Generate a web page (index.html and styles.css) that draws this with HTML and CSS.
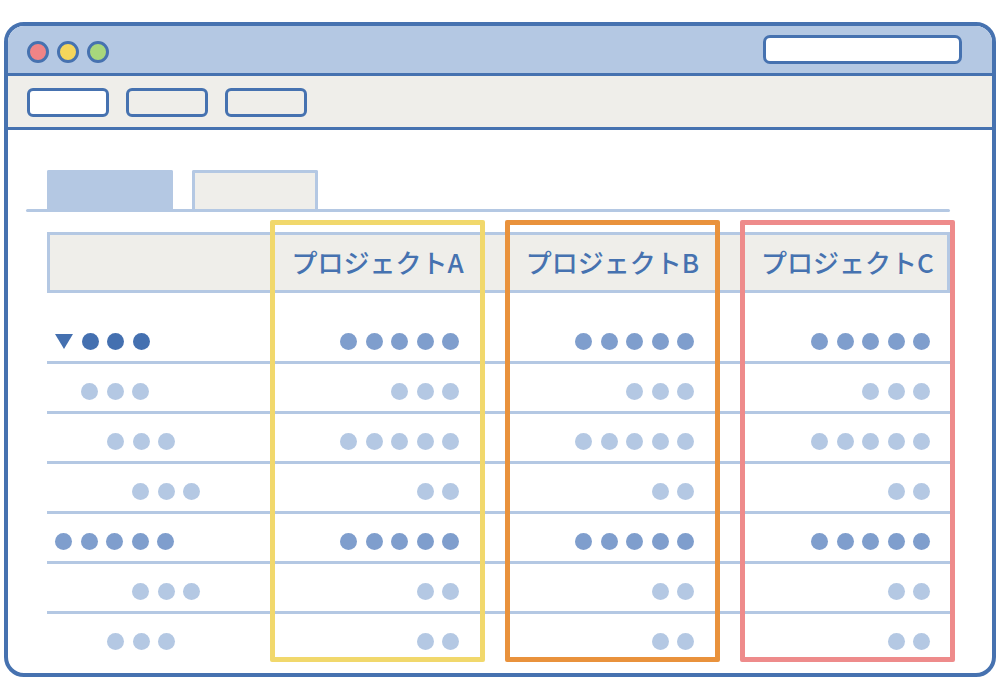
FILE: index.html
```html
<!DOCTYPE html>
<html lang="ja">
<head>
<meta charset="utf-8">
<title>Project comparison</title>
<link rel="stylesheet" href="styles.css">
</head>
<body>
<div class="window">
  <div class="titlebar">
    <div class="lights">
      <span class="light red"></span>
      <span class="light yellow"></span>
      <span class="light green"></span>
    </div>
    <div class="search"></div>
  </div>
  <div class="toolbar">
    <span class="btn active"></span>
    <span class="btn"></span>
    <span class="btn"></span>
  </div>
  <div class="content">
    <div class="tabs">
      <span class="tab current"></span>
      <span class="tab"></span>
    </div>
    <div class="tabline"></div>
    <div class="table">
      <div class="thead">
        <div class="th-label"></div>
        <div class="th">プロジェクトA</div>
        <div class="th">プロジェクトB</div>
        <div class="th last">プロジェクトC</div>
      </div>
      <div class="tbody">
        <div class="row">
          <div class="label lv0"><svg class="caret" width="18" height="15" viewBox="0 0 18 15"><polygon points="0,0 18,0 9,15" fill="#4470b0"/></svg><span class="dot d"></span><span class="dot d"></span><span class="dot d"></span></div>
          <div class="cell"><span class="dot m"></span><span class="dot m"></span><span class="dot m"></span><span class="dot m"></span><span class="dot m"></span></div>
          <div class="cell"><span class="dot m"></span><span class="dot m"></span><span class="dot m"></span><span class="dot m"></span><span class="dot m"></span></div>
          <div class="cell last"><span class="dot m"></span><span class="dot m"></span><span class="dot m"></span><span class="dot m"></span><span class="dot m"></span></div>
        </div>
        <div class="row">
          <div class="label lv1"><span class="dot l"></span><span class="dot l"></span><span class="dot l"></span></div>
          <div class="cell"><span class="dot l"></span><span class="dot l"></span><span class="dot l"></span></div>
          <div class="cell"><span class="dot l"></span><span class="dot l"></span><span class="dot l"></span></div>
          <div class="cell last"><span class="dot l"></span><span class="dot l"></span><span class="dot l"></span></div>
        </div>
        <div class="row">
          <div class="label lv2"><span class="dot l"></span><span class="dot l"></span><span class="dot l"></span></div>
          <div class="cell"><span class="dot l"></span><span class="dot l"></span><span class="dot l"></span><span class="dot l"></span><span class="dot l"></span></div>
          <div class="cell"><span class="dot l"></span><span class="dot l"></span><span class="dot l"></span><span class="dot l"></span><span class="dot l"></span></div>
          <div class="cell last"><span class="dot l"></span><span class="dot l"></span><span class="dot l"></span><span class="dot l"></span><span class="dot l"></span></div>
        </div>
        <div class="row">
          <div class="label lv3"><span class="dot l"></span><span class="dot l"></span><span class="dot l"></span></div>
          <div class="cell"><span class="dot l"></span><span class="dot l"></span></div>
          <div class="cell"><span class="dot l"></span><span class="dot l"></span></div>
          <div class="cell last"><span class="dot l"></span><span class="dot l"></span></div>
        </div>
        <div class="row">
          <div class="label lv0"><span class="dot m"></span><span class="dot m"></span><span class="dot m"></span><span class="dot m"></span><span class="dot m"></span></div>
          <div class="cell"><span class="dot m"></span><span class="dot m"></span><span class="dot m"></span><span class="dot m"></span><span class="dot m"></span></div>
          <div class="cell"><span class="dot m"></span><span class="dot m"></span><span class="dot m"></span><span class="dot m"></span><span class="dot m"></span></div>
          <div class="cell last"><span class="dot m"></span><span class="dot m"></span><span class="dot m"></span><span class="dot m"></span><span class="dot m"></span></div>
        </div>
        <div class="row">
          <div class="label lv3"><span class="dot l"></span><span class="dot l"></span><span class="dot l"></span></div>
          <div class="cell"><span class="dot l"></span><span class="dot l"></span></div>
          <div class="cell"><span class="dot l"></span><span class="dot l"></span></div>
          <div class="cell last"><span class="dot l"></span><span class="dot l"></span></div>
        </div>
        <div class="row">
          <div class="label lv2"><span class="dot l"></span><span class="dot l"></span><span class="dot l"></span></div>
          <div class="cell"><span class="dot l"></span><span class="dot l"></span></div>
          <div class="cell"><span class="dot l"></span><span class="dot l"></span></div>
          <div class="cell last"><span class="dot l"></span><span class="dot l"></span></div>
        </div>
      </div>
      <div class="highlights">
        <div class="hl hl-a"></div>
        <div class="hl hl-b"></div>
        <div class="hl hl-c"></div>
      </div>
    </div>
  </div>
</div>
</body>
</html>
```
FILE: styles.css
```css
* { box-sizing: border-box; }

html, body {
  margin: 0;
  padding: 0;
  background: #ffffff;
  font-family: "Noto Sans CJK JP", "Noto Sans", sans-serif;
}

.window {
  margin: 22px 0 0 4px;
  width: 992px;
  height: 655px;
  border: 4px solid #4672b0;
  border-radius: 20px;
  overflow: hidden;
  background: #ffffff;
}

.titlebar {
  height: 50px;
  background: #b4c8e3;
  border-bottom: 3px solid #4672b0;
  display: flex;
  align-items: flex-end;
  justify-content: space-between;
  padding: 0 30px 9px 19px;
}

.lights {
  display: flex;
  gap: 8px;
  margin-bottom: 1px;
}

.light {
  width: 22px;
  height: 22px;
  border-radius: 50%;
  border: 3.5px solid #4672b0;
}
.light.red { background: #f08486; }
.light.yellow { background: #f5d65c; }
.light.green { background: #a8d77c; }

.search {
  width: 199px;
  height: 29px;
  background: #ffffff;
  border: 3px solid #4672b0;
  border-radius: 7px;
}

.toolbar {
  height: 54px;
  background: #efeeea;
  border-bottom: 3px solid #4672b0;
  display: flex;
  gap: 17px;
  padding: 12px 0 0 19px;
}

.btn {
  width: 82px;
  height: 29px;
  border: 3px solid #4672b0;
  border-radius: 6px;
  background: #efeeea;
}
.btn.active { background: #ffffff; }

.content {
  padding: 40px 0 0 18px;
}

.tabs {
  display: flex;
  gap: 19px;
  margin-left: 21px;
}

.tab {
  width: 126px;
  height: 39px;
  background: #efeeea;
  border: 3px solid #b4c8e3;
  border-bottom: none;
  border-radius: 2px 2px 0 0;
}
.tab.current {
  background: #b4c8e3;
}

.tabline {
  width: 924px;
  height: 3px;
  border-radius: 2px;
  background: #b4c8e3;
}

.table {
  position: relative;
  width: 903px;
  margin: 20px 0 0 21px;
}

.thead {
  height: 61px;
  border: 3px solid #b4c8e3;
  background: #efeeea;
  display: flex;
  align-items: center;
}

.th-label { width: 220px; }

.th {
  width: 215px;
  text-align: center;
  font-size: 26px;
  font-weight: 500;
  color: #4672b0;
  line-height: 1;
  white-space: nowrap;
  margin-top: -2px;
}
.th + .th { margin-left: 20px; }
.th.last {
  width: 207px;
  padding-left: 8px;
}

.tbody {
  padding-top: 21px;
}

.row {
  display: flex;
  align-items: center;
  height: 50px;
  padding-top: 7px;
  border-bottom: 3px solid #b4c8e3;
}
.row:last-child {
  height: 47px;
  border-bottom: none;
}

.label {
  width: 223px;
  display: flex;
  align-items: center;
  gap: 8.5px;
}
.lv0 { padding-left: 8px; }
.lv1 { padding-left: 34px; }
.lv2 { padding-left: 60px; }
.lv3 { padding-left: 85px; }

.caret { display: block; }

.cell {
  width: 215px;
  display: flex;
  justify-content: flex-end;
  gap: 8.5px;
  padding-right: 26px;
}
.cell + .cell { margin-left: 20px; }
.cell.last {
  width: 210px;
  padding-right: 20px;
}

.dot {
  width: 17px;
  height: 17px;
  border-radius: 50%;
  flex: none;
}
.dot.d { background: #4470b0; }
.dot.m { background: #7f9ecd; }
.dot.l { background: #b4c8e3; }

.highlights {
  position: absolute;
  left: 223px;
  top: -12px;
  display: flex;
  gap: 20px;
  pointer-events: none;
}

.hl {
  width: 215px;
  height: 442px;
  border: 5px solid;
  border-radius: 2px;
}
.hl-a { border-color: #f1d86c; }
.hl-b { border-color: #e9923c; }
.hl-c { border-color: #ee8b8b; }
```
